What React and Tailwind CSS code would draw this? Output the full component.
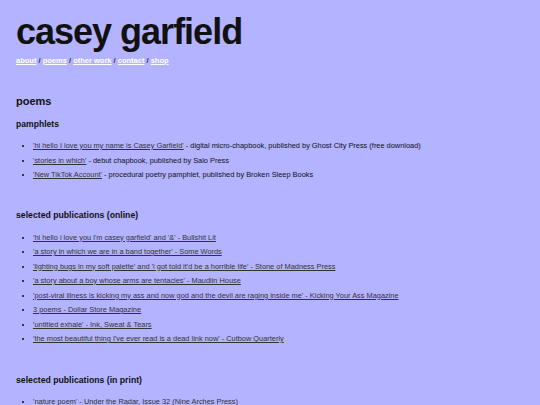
import React from "react";

const pamphlets = [
  { link: "'hi hello I love you my name is Casey Garfield'", rest: " - digital micro-chapbook, published by Ghost City Press (free download)" },
  { link: "'stories in which'", rest: " - debut chapbook, published by Salo Press" },
  { link: "'New TikTok Account'", rest: " - procedural poetry pamphlet, published by Broken Sleep Books" },
];

const online = [
  "'hi hello i love you i'm casey garfield' and '&' - Bullshit Lit",
  "'a story in which we are in a band together' - Some Words",
  "'lighting bugs in my soft palette' and 'i got told it'd be a horrible life' - Stone of Madness Press",
  "'a story about a boy whose arms are tentacles' - Maudlin House",
  "'post-viral illness is kicking my ass and now god and the devil are raging inside me' - Kicking Your Ass Magazine",
  "3 poems - Dollar Store Magazine",
  "'untitled exhale' - Ink, Sweat & Tears",
  "'the most beautiful thing I've ever read is a dead link now' - Cutbow Quarterly",
];

const print = ["'nature poem' - Under the Radar, Issue 32 (Nine Arches Press)"];

const navItems = ["about", "poems", "other work", "contact", "shop"];

export default function App() {
  return (
    <div className="min-h-screen bg-[#b3b3ff] px-[16px] pt-[14px] pb-8 text-[#111] font-['Liberation_Sans',Arial,sans-serif]">
      <h1 className="text-[36px] leading-[36px] font-bold tracking-[-1px]">casey garfield</h1>

      <nav className="mt-[6px] text-[7.5px] leading-[10px] font-bold text-[#333]">
        {navItems.map((item, i) => (
          <span key={item}>
            <a href="#" className="text-white underline">{item}</a>
            {i < navItems.length - 1 && " / "}
          </span>
        ))}
      </nav>

      <h2 className="mt-[28px] text-[11px] leading-[14px] font-bold">poems</h2>

      <h3 className="mt-[10px] text-[8.6px] leading-[12px] font-bold">pamphlets</h3>
      <ul className="mt-[9px] list-disc pl-[17px] text-[7.4px] leading-[14.5px]">
        {pamphlets.map((p) => (
          <li key={p.link}>
            <a href="#" className="underline text-[#333]">{p.link}</a>
            {p.rest}
          </li>
        ))}
      </ul>

      <h3 className="mt-[26px] text-[8.7px] leading-[12px] font-bold">selected publications (online)</h3>
      <ul className="mt-[10px] list-disc pl-[17px] text-[7.4px] leading-[14.5px]">
        {online.map((t) => (
          <li key={t}>
            <a href="#" className="underline text-[#333]">{t}</a>
          </li>
        ))}
      </ul>

      <h3 className="mt-[27px] text-[8.7px] leading-[12px] font-bold">selected publications (in print)</h3>
      <ul className="mt-[9px] list-disc pl-[17px] text-[7.4px] leading-[14.5px]">
        {print.map((t) => (
          <li key={t}>
            <a href="#" className="underline text-[#333]">{t}</a>
          </li>
        ))}
      </ul>
    </div>
  );
}
